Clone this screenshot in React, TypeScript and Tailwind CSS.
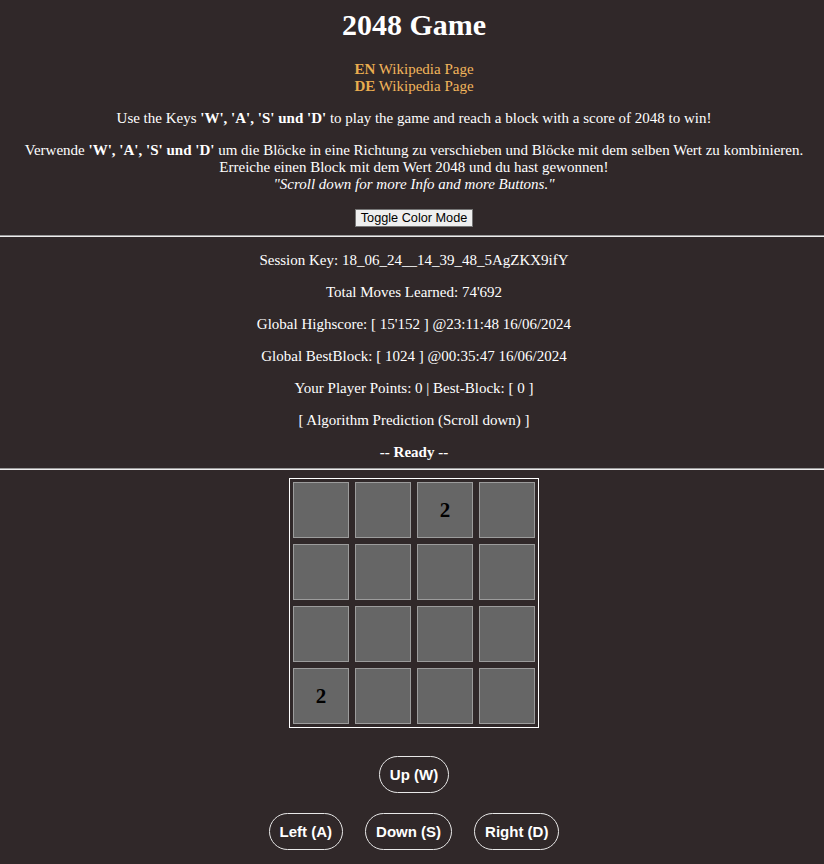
import React from 'react';

const board: (number | null)[][] = [
  [null, null, 2, null],
  [null, null, null, null],
  [null, null, null, null],
  [2, null, null, null],
];

const stats = [
  'Session Key: 18_06_24__14_39_48_5AgZKX9ifY',
  "Total Moves Learned: 74'692",
  "Global Highscore: [ 15'152 ] @23:11:48 16/06/2024",
  'Global BestBlock: [ 1024 ] @00:35:47 16/06/2024',
  'Your Player Points: 0 | Best-Block: [ 0 ]',
  '[ Algorithm Prediction (Scroll down) ]',
];

const MoveButton: React.FC<{ label: string }> = ({ label }) => (
  <button className="h-[37px] px-[10px] rounded-full border border-[#e8e8e8] text-white font-bold text-[15px] font-['Liberation_Sans',Arial,sans-serif]">
    {label}
  </button>
);

export default function App() {
  return (
    <div className="min-h-[864px] bg-[#302829] text-white text-center text-[15px] leading-[17px] font-['Liberation_Serif','Times_New_Roman',serif]">
      {/* Header */}
      <div className="flex flex-col items-center pt-[7px] pl-[4px]">
        <h1 className="text-[30px] leading-[36px] font-bold">2048 Game</h1>
        <div className="mt-[18px] text-[#f2b55c]">
          <div>
            <span className="font-bold text-[#e9ad4f]">EN</span> Wikipedia Page
          </div>
          <div>
            <span className="font-bold text-[#e9ad4f]">DE</span> Wikipedia Page
          </div>
        </div>
        <p className="mt-[15px]">
          Use the Keys <b>'W', 'A', 'S' und 'D'</b> to play the game and reach a block with a score of 2048 to win!
        </p>
        <p className="mt-[15px]">
          Verwende <b>'W', 'A', 'S' und 'D'</b> um die Blöcke in eine Richtung zu verschieben und Blöcke mit dem selben Wert zu kombinieren.
          <br />
          Erreiche einen Block mit dem Wert 2048 und du hast gewonnen!
          <br />
          <i>"Scroll down for more Info and more Buttons."</i>
        </p>
        <button className="mt-[16px] h-[18px] px-[5px] bg-[#efefef] border border-[#767676] text-black text-[12.7px] leading-[15px] font-['Liberation_Sans',Arial,sans-serif]">
          Toggle Color Mode
        </button>
      </div>

      <div className="mt-[8px] border-t border-b border-t-[#9a9a9a] border-b-[#eeeeee]" />

      {/* Stats */}
      <div className="flex flex-col items-center gap-[15px] pt-[15px] pl-[4px]">
        {stats.map((s) => (
          <div key={s}>{s}</div>
        ))}
        <div className="font-bold">-- Ready --</div>
      </div>

      <div className="mt-[7px] border-t border-b border-t-[#9a9a9a] border-b-[#eeeeee]" />

      {/* Board */}
      <div className="flex justify-center pt-[8px] pl-[4px]">
        <div className="border border-white p-[3px] grid grid-cols-4 gap-[6px]">
          {board.flat().map((v, i) => (
            <div
              key={i}
              className="w-[56px] h-[56px] bg-[#666666] border border-[#9c9c9c] flex items-center justify-center text-black font-bold text-[21px]"
            >
              {v ?? ''}
            </div>
          ))}
        </div>
      </div>

      {/* Controls */}
      <div className="flex flex-col items-center pt-[28px] gap-[20px] pl-[4px]">
        <MoveButton label="Up (W)" />
        <div className="flex gap-[22px]">
          <MoveButton label="Left (A)" />
          <MoveButton label="Down (S)" />
          <MoveButton label="Right (D)" />
        </div>
      </div>
    </div>
  );
}
